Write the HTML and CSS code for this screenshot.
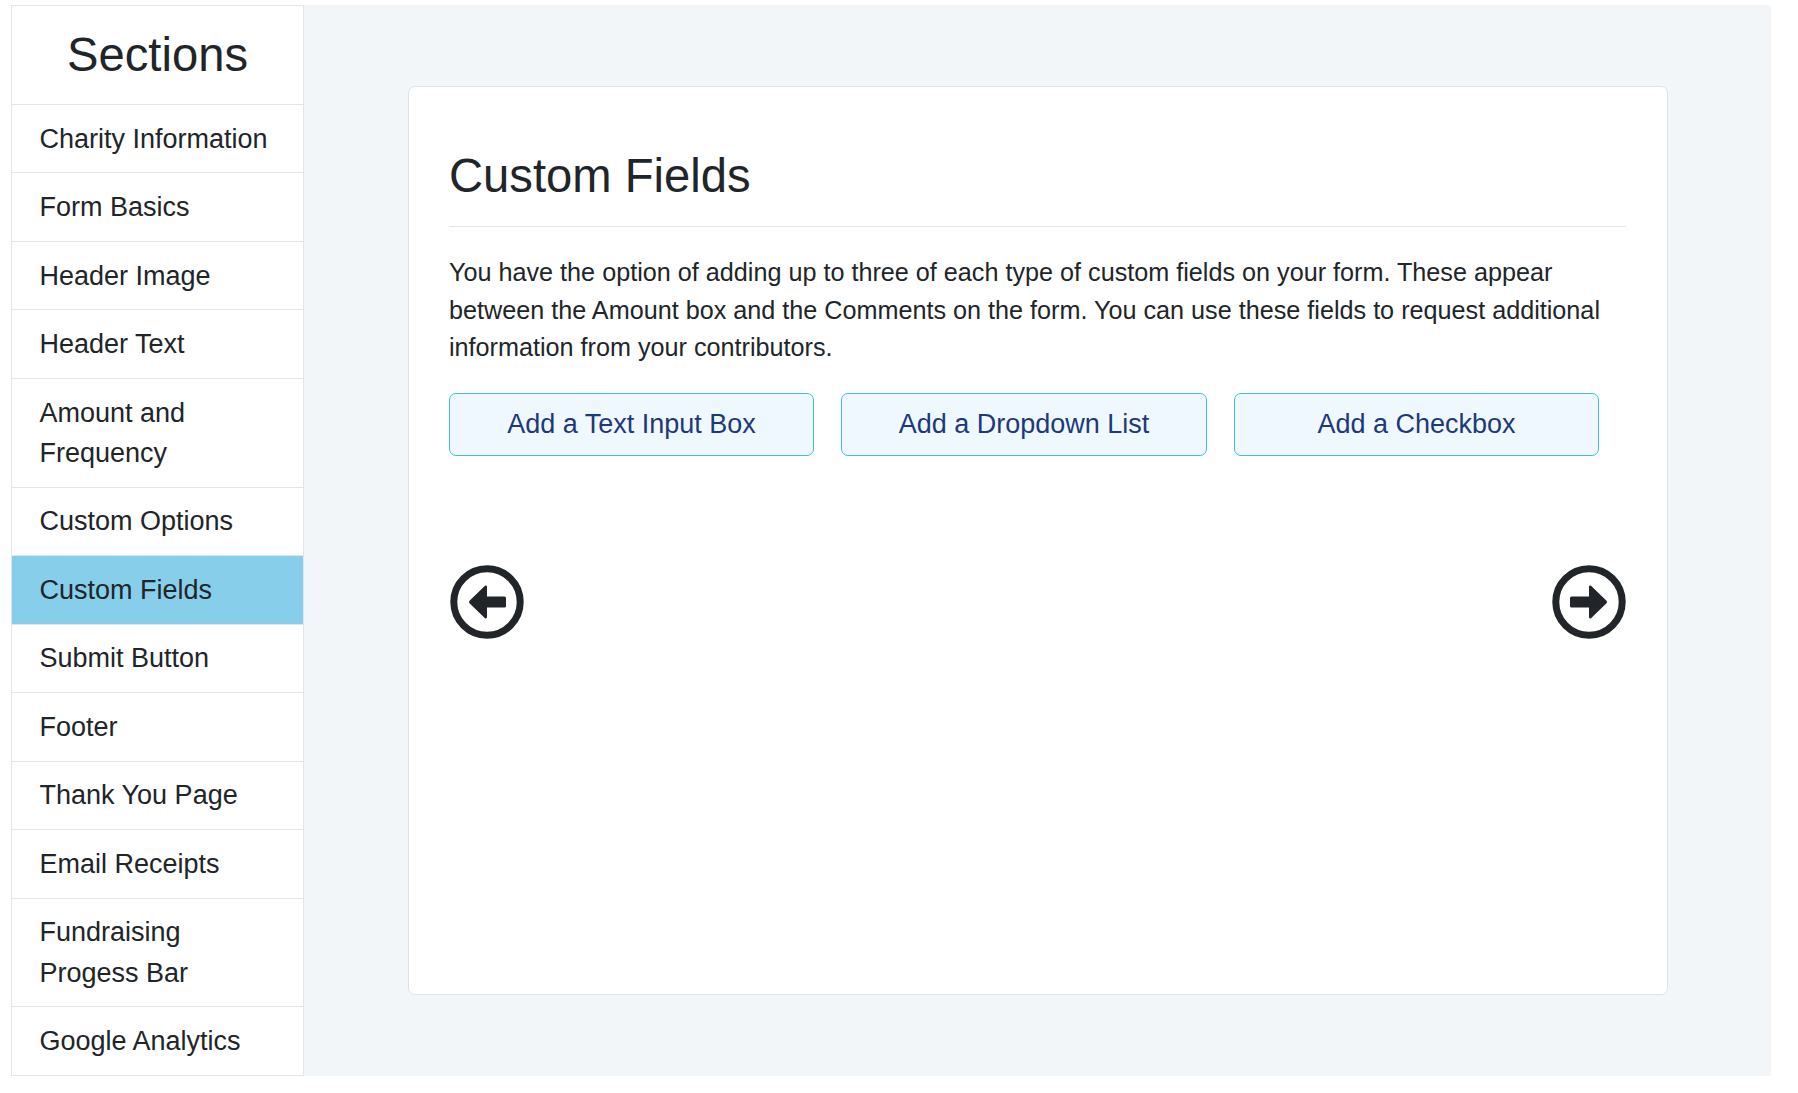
FILE: index.html

```html
<!DOCTYPE html>
<html lang="en">
<head>
    <meta charset="UTF-8">
    <title>Custom Fields</title>
    <link rel="stylesheet" href="styles.css">
</head>
<body>
    <div class="wrapper">
        <nav class="sidebar">
            <h2 class="sidebar-title">Sections</h2>
            <a class="section-link">Charity Information</a>
            <a class="section-link">Form Basics</a>
            <a class="section-link">Header Image</a>
            <a class="section-link">Header Text</a>
            <a class="section-link">Amount and Frequency</a>
            <a class="section-link">Custom Options</a>
            <a class="section-link active">Custom Fields</a>
            <a class="section-link">Submit Button</a>
            <a class="section-link">Footer</a>
            <a class="section-link">Thank You Page</a>
            <a class="section-link">Email Receipts</a>
            <a class="section-link">Fundraising Progess Bar</a>
            <a class="section-link">Google Analytics</a>
        </nav>
        <main class="content">
            <section class="card">
                <h1 class="card-title">Custom Fields</h1>
                <p class="card-text">You have the option of adding up to three of each type of custom fields on your form. These appear between the Amount box and the Comments on the form. You can use these fields to request additional information from your contributors.</p>
                <div class="add-buttons">
                    <button class="add-button">Add a Text Input Box</button>
                    <button class="add-button wide">Add a Dropdown List</button>
                    <button class="add-button">Add a Checkbox</button>
                </div>
                <div class="pager">
                    <svg class="pager-icon" viewBox="0 0 74 74">
                        <circle cx="37" cy="37" r="33.2" fill="none" stroke="#212529" stroke-width="7"/>
                        <path d="M35 20.8 L19.5 35.8 Q18.5 37 19.5 38.2 L35 53.2 Q37 54 37 52 V42.5 H54.5 Q56 42.5 56 41 V33 Q56 31.5 54.5 31.5 H37 V22 Q37 20 35 20.8 Z" fill="#212529"/>
                    </svg>
                    <svg class="pager-icon" viewBox="0 0 74 74">
                        <circle cx="37" cy="37" r="33.2" fill="none" stroke="#212529" stroke-width="7"/>
                        <path d="M39 20.8 L54.5 35.8 Q55.5 37 54.5 38.2 L39 53.2 Q37 54 37 52 V42.5 H19.5 Q18 42.5 18 41 V33 Q18 31.5 19.5 31.5 H37 V22 Q37 20 39 20.8 Z" fill="#212529"/>
                    </svg>
                </div>
            </section>
        </main>
    </div>
</body>
</html>
```

FILE: styles.css

```css
* {
    box-sizing: border-box;
}

body {
    margin: 0;
    padding: 5px 27px 0 11px;
    background-color: #fff;
    color: #212529;
    font-family: "Liberation Sans", Arial, sans-serif;
}

.wrapper {
    display: flex;
    height: 1071px;
}

.sidebar {
    width: 293px;
    flex-shrink: 0;
    border: 1px solid #e3e5e8;
    border-bottom: none;
    background-color: #fff;
}

.sidebar-title {
    margin: 0;
    height: 99px;
    line-height: 98px;
    text-align: center;
    font-size: 47.2px;
    font-weight: 400;
    border-bottom: 1px solid #e3e5e8;
}

.section-link {
    display: block;
    padding: 13.6px 20px 13.6px 27.5px;
    font-size: 27px;
    line-height: 40.3px;
    border-bottom: 1px solid #e3e5e8;
}

.section-link.active {
    background-color: #87ceeb;
}

.content {
    flex: 1;
    padding: 81px 103px 81px 104px;
    background-color: #f3f6f9;
}

.card {
    height: 909px;
    padding: 0 41px 0 40px;
    background-color: #fff;
    border: 1px solid #dfe2e5;
    border-radius: 7px;
}

.card-title {
    margin: 0;
    padding: 60px 0 21px;
    font-size: 47.2px;
    line-height: 58px;
    font-weight: 400;
    border-bottom: 1px solid #e3e5e8;
}

.card-text {
    margin: 27px 0 0;
    font-size: 25.2px;
    line-height: 37.6px;
}

.add-buttons {
    display: flex;
    gap: 27px;
    margin-top: 26px;
}

.add-button {
    width: 365px;
    height: 63px;
    padding: 0;
    font-family: inherit;
    font-size: 27px;
    color: #1c3a7a;
    background-color: #f0f8ff;
    border: 1.5px solid #3cc0d8;
    border-radius: 7px;
}

.add-button.wide {
    width: 366px;
}

.pager {
    display: flex;
    justify-content: space-between;
    margin-top: 109px;
    padding: 0 0 0 1px;
}

.pager-icon {
    display: block;
    width: 74px;
    height: 74px;
}
```
